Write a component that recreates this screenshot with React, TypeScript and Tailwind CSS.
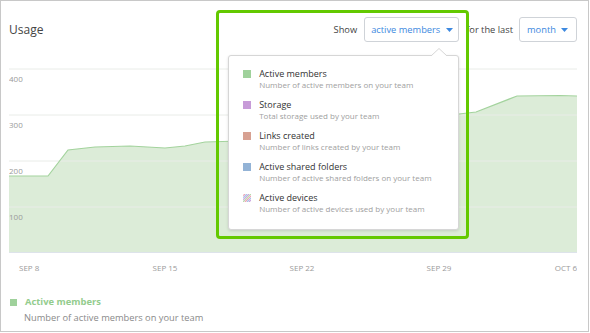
import React from "react";

const METRICS = [
  { title: "Active members", desc: "Number of active members on your team", color: "#9fd19b" },
  { title: "Storage", desc: "Total storage used by your team", color: "#c79bd8" },
  { title: "Links created", desc: "Number of links created by your team", color: "#d7a192" },
  { title: "Active shared folders", desc: "Number of active shared folders on your team", color: "#93b3d6" },
  { title: "Active devices", desc: "Number of active devices used by your team", color: "stripes" },
];

// chart points in svg coords (x 0..568, y 0..192)
const POINTS: [number, number][] = [
  [0, 116], [39, 116], [59, 90], [86, 87], [121, 86], [156, 88], [176, 86], [196, 82],
  [231, 81], [280, 79], [330, 74], [380, 68], [420, 60], [450, 54], [467, 52],
  [508, 36], [551, 35.5], [568, 36],
];

function Caret() {
  return (
    <svg width="7" height="4" viewBox="0 0 7 4">
      <path d="M0 0 L7 0 L3.5 4 Z" fill="#3d89e0" />
    </svg>
  );
}

function Swatch({ color }: { color: string }) {
  if (color === "stripes") {
    return (
      <svg width="8" height="8" viewBox="0 0 8 8" className="shrink-0">
        <defs>
          <clipPath id="sw">
            <rect width="8" height="8" />
          </clipPath>
        </defs>
        <g clipPath="url(#sw)" strokeWidth="1.2">
          <line x1="-8" y1="8" x2="0" y2="0" stroke="#b6dcaa" />
          <line x1="-6" y1="8" x2="2" y2="0" stroke="#f2a2b6" />
          <line x1="-4" y1="8" x2="4" y2="0" stroke="#a6c3e8" />
          <line x1="-2" y1="8" x2="6" y2="0" stroke="#c9a3df" />
          <line x1="0" y1="8" x2="8" y2="0" stroke="#b6dcaa" />
          <line x1="2" y1="8" x2="10" y2="0" stroke="#f2a2b6" />
          <line x1="4" y1="8" x2="12" y2="0" stroke="#a6c3e8" />
          <line x1="6" y1="8" x2="14" y2="0" stroke="#c9a3df" />
        </g>
      </svg>
    );
  }
  return <span className="w-[8px] h-[8px] shrink-0" style={{ backgroundColor: color }} />;
}

function UsageChart() {
  const line = POINTS.map(([x, y], i) => `${i === 0 ? "M" : "L"}${x} ${y}`).join(" ");
  const area = `${line} L568 192 L0 192 Z`;
  const grid = [9, 55, 101, 147];
  const yLabels = ["400", "300", "200", "100"];
  const xLabels: [string, number, "start" | "middle" | "end"][] = [
    ["SEP 8", 10, "start"],
    ["SEP 15", 156, "middle"],
    ["SEP 22", 293, "middle"],
    ["SEP 29", 430, "middle"],
    ["OCT 6", 568, "end"],
  ];
  return (
    <svg width="568" height="220" viewBox="0 0 568 220" className="mt-[18px] block">
      <path d={area} fill="#dcecd8" />
      {grid.map((y) => (
        <line key={y} x1="0" x2="568" y1={y} y2={y} stroke="#e9ece8" strokeWidth="1" />
      ))}
      <line x1="0" x2="568" y1="192.5" y2="192.5" stroke="#dde3ea" strokeWidth="1" />
      <path d={line} fill="none" stroke="#a3d39d" strokeWidth="1.2" />
      {yLabels.map((t, i) => (
        <text key={t} x="0" y={grid[i] + 13} fontSize="8" fill="#9a9a9a" fontFamily="'Open Sans', sans-serif">
          {t}
        </text>
      ))}
      {xLabels.map(([t, x, a]) => (
        <text key={t} x={x} y="211" fontSize="8" fill="#9a9a9a" textAnchor={a} fontFamily="'Open Sans', sans-serif">
          {t}
        </text>
      ))}
    </svg>
  );
}

export default function App() {
  return (
    <div className="relative w-[589px] h-[332px] border border-[#c8c8c8] bg-white pl-[8px] pr-[11px] pt-[16px] font-['Open_Sans',sans-serif] text-[#444]">
      {/* Header */}
      <div className="flex items-center justify-between h-[25px]">
        <h1 className="text-[12px] text-[#444] leading-none">Usage</h1>
        <div className="flex items-center text-[9.3px]">
          <span className="mr-[7px]">Show</span>
          <div className="relative">
            <div className="w-[95px] h-[25px] border border-[#cfd3d8] rounded-[3px] flex items-center justify-between pl-[6px] pr-[5px] text-[#3d89e0]">
              <span>active members</span>
              <Caret />
            </div>

            {/* Dropdown */}
            <div className="absolute right-0 top-[38px] w-[231px] bg-white border border-[#d6d6d6] rounded-[3px] shadow-[0_1px_3px_rgba(0,0,0,0.12)] pt-[12px] pb-[15px] pl-[14px] z-10">
              <svg width="16" height="8" viewBox="0 0 16 8" className="absolute -top-[8px] right-[11px]">
                <path d="M0 8 L8 0.5 L16 8" fill="white" stroke="#d6d6d6" strokeWidth="1" />
              </svg>
              <div className="flex flex-col gap-[9px]">
                {METRICS.map((m) => (
                  <div key={m.title} className="flex items-start gap-[8px]">
                    <div className="h-[12px] flex items-center">
                      <Swatch color={m.color} />
                    </div>
                    <div className="flex flex-col">
                      <span className="text-[9px] leading-[12px] text-[#333]">{m.title}</span>
                      <span className="text-[8px] leading-[10px] text-[#a0a0a0]">{m.desc}</span>
                    </div>
                  </div>
                ))}
              </div>
            </div>
          </div>
          <span className="ml-[7px] mr-[6px]">for the last</span>
          <div className="w-[58px] h-[25px] border border-[#cfd3d8] rounded-[3px] flex items-center justify-between pl-[7px] pr-[8px] text-[#3d89e0]">
            <span>month</span>
            <Caret />
          </div>
        </div>
      </div>

      <UsageChart />

      {/* Legend */}
      <div className="mt-[15px] flex flex-col gap-[2px]">
        <div className="flex items-center gap-[8px] h-[14px]">
          <span className="w-[7px] h-[7px] ml-[1px] bg-[#9fd19b]" />
          <span className="text-[9.4px] font-bold text-[#93cc8d]">Active members</span>
        </div>
        <span className="pl-[15px] text-[9.3px] leading-[14px] text-[#8a8a8a]">
          Number of active members on your team
        </span>
      </div>

      {/* Highlight frame */}
      <div className="absolute left-[215px] top-[9px] w-[253px] h-[229px] border-[3px] border-[#63c900] rounded-[4px] z-20 pointer-events-none" />
    </div>
  );
}
